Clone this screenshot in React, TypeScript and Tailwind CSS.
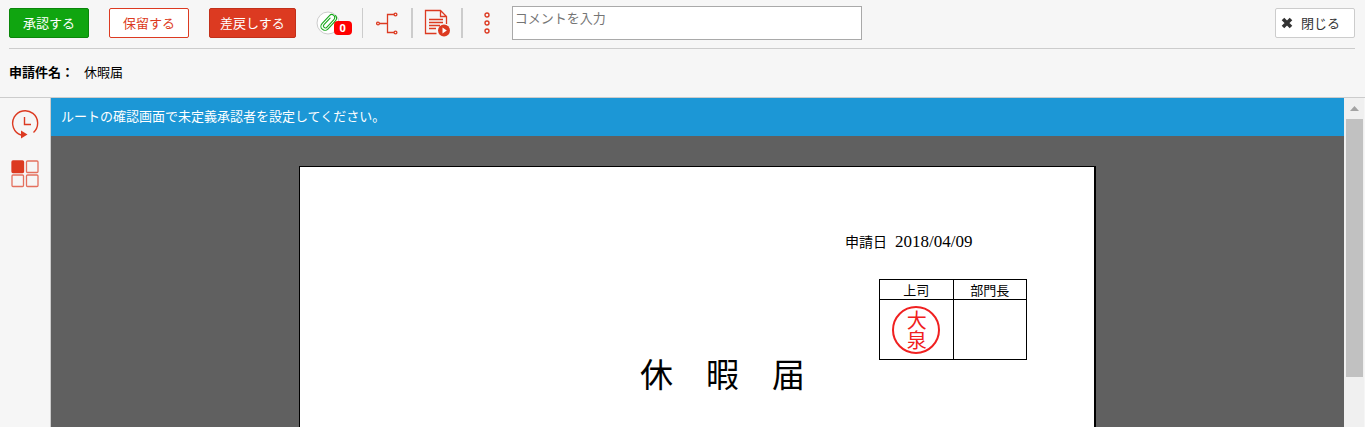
import type { ReactNode } from 'react'

const actions = [
  { label: '承認する', style: 'border-[#0a860a] bg-[#10a510] text-white' },
  { label: '保留する', style: 'border-[#dc3a21] bg-white text-[#dc3a21]' },
  { label: '差戻しする', style: 'border-[#c2301a] bg-[#dc3a21] text-white' },
]

const approvers = [
  { title: '上司', stamp: true },
  { title: '部門長', stamp: false },
]

function ToolButton({ label, className, children }: { label: string; className: string; children: ReactNode }) {
  return (
    <button type="button" aria-label={label} className={`flex h-[30px] items-center justify-center border-[#cccccc] ${className}`}>
      {children}
    </button>
  )
}

function ClipIcon() {
  return (
    <svg width="42" height="26" viewBox="0 0 42 26" fill="none">
      <circle cx="12" cy="13" r="11" fill="#fff" stroke="#cccccc" />
      <g transform="rotate(43 12 13)" stroke="#17a81a" strokeWidth="1.1" strokeLinecap="round">
        <path d="M16 8 V17.500 A4 4 0 0 1 8 17.500 V6.500 A3 3 0 0 1 14 6.500 V17 A1.900 1.900 0 0 1 10.200 17 V8" />
        <path d="M16 8 V6.500 A4 4 0 0 0 12.500 2.500" />
      </g>
    </svg>
  )
}

function RouteIcon() {
  return (
    <svg width="22" height="24" viewBox="0 0 22 24" fill="none" stroke="#dc3a21" strokeWidth="1.300">
      <path d="M3.500 12.500 H11.500 M18 3.500 H11.500 V21.500 H18" />
      <circle cx="2" cy="12.500" r="1.400" />
      <circle cx="19.500" cy="3.500" r="1.400" />
      <circle cx="19.500" cy="21.500" r="1.400" />
    </svg>
  )
}

function DocumentIcon() {
  return (
    <svg width="26" height="28" viewBox="0 0 26 28" fill="none" stroke="#dc3a21" strokeWidth="1.300">
      <path d="M12.500 24.500 H1.500 V1.500 H16.500 L22.500 7.500 V15 M16.500 1.500 V7.500 H22.500" />
      <path d="M5 10.500 H19 M5 13.500 H19 M5 16.500 H16 M5 19.500 H12" />
      <circle cx="20" cy="21.500" r="6" fill="#dc3a21" stroke="none" />
      <path d="M18.500 18.500 V24.500 L22.800 21.500 Z" fill="#fff" stroke="none" />
    </svg>
  )
}

function MenuIcon() {
  return (
    <svg width="6" height="22" viewBox="0 0 6 22" fill="none" stroke="#dc3a21" strokeWidth="1.400">
      <circle cx="3" cy="3" r="2" />
      <circle cx="3" cy="11" r="2" />
      <circle cx="3" cy="19" r="2" />
    </svg>
  )
}

function HistoryIcon() {
  return (
    <svg width="28" height="30" viewBox="0 0 28 30" fill="none" stroke="#dc3a21" strokeWidth="1.400">
      <path d="M22.500 23.500 A12.500 12.500 0 1 0 10 26" />
      <path d="M13.500 8 V15.500 H20" />
      <path d="M10 21.500 V29.500 L16.500 25.500 Z" fill="#dc3a21" stroke="none" />
    </svg>
  )
}

function TilesIcon() {
  return (
    <svg width="28" height="28" viewBox="0 0 28 28" fill="none" stroke="#e4705e" strokeWidth="1.300">
      <rect x="1" y="1" width="11.500" height="11.500" rx="1" fill="#dc3a21" stroke="#dc3a21" />
      <rect x="15.500" y="1" width="11.500" height="11.500" rx="1" />
      <rect x="1" y="15" width="11.500" height="11.500" rx="1" />
      <rect x="15.500" y="15" width="11.500" height="11.500" rx="1" />
    </svg>
  )
}

function CloseIcon() {
  return (
    <svg width="12" height="12" viewBox="0 0 12 12" stroke="#333" strokeWidth="3.600">
      <path d="M2 2 L10 10 M10 2 L2 10" />
    </svg>
  )
}

function Stamp() {
  return (
    <div className="mx-auto flex size-12 items-center justify-center rounded-full border-2 border-[#f02020] text-xl text-[#f02020]">
      <span className="[writing-mode:vertical-rl]">大泉</span>
    </div>
  )
}

export default function App() {
  return (
    <div className="flex h-screen flex-col overflow-hidden bg-[#f6f6f6] font-['Noto_Sans_CJK_JP',sans-serif] text-[13px] text-black">
      <header className="shrink-0 border-b border-[#cccccc] pr-[10px] pl-[9px]">
        <div className="flex h-[49px] items-start border-b border-[#cccccc]">
          <div className="flex gap-5 pt-2">
            {actions.map(({ label, style }) => (
              <button key={label} type="button" className={`h-[30px] min-w-20 rounded-xs border px-[10px] ${style}`}>
                {label}
              </button>
            ))}
          </div>
          <div className="ml-[17px] flex pt-2">
            <ToolButton label="添付ファイル" className="relative w-[50px] border-r">
              <ClipIcon />
              <span className="absolute right-[10px] bottom-[3px] h-[14px] w-[18px] rounded-sm bg-[#ff0000] text-center font-['Open_Sans',sans-serif] text-[11px] leading-[14px] font-bold text-white">
                0
              </span>
            </ToolButton>
            <ToolButton label="ルート" className="w-[50px] border-r-2">
              <RouteIcon />
            </ToolButton>
            <ToolButton label="処理状況" className="w-[50px] border-r-2">
              <DocumentIcon />
            </ToolButton>
            <ToolButton label="メニュー" className="w-[49px]">
              <MenuIcon />
            </ToolButton>
          </div>
          <textarea
            aria-label="コメント"
            placeholder="コメントを入力"
            className="mt-[6px] h-[34px] w-[350px] resize-none border border-[#a9a9a9] bg-white px-[2px] py-px leading-5 placeholder:text-[#757575]"
          />
          <button type="button" className="mt-2 ml-auto flex h-[30px] w-20 items-center gap-2 rounded-xs border border-[#cccccc] bg-white pl-[5px] text-[#333333]">
            <CloseIcon />
            閉じる
          </button>
        </div>
        <div className="flex h-12 items-center pb-[2px]">
          <span className="font-bold">申請件名：</span>
          <span className="ml-[10px]">休暇届</span>
        </div>
      </header>

      <div className="flex min-h-0 flex-1">
        <nav className="flex w-[51px] shrink-0 flex-col items-center gap-[21px] border-r border-[#cccccc] pt-[11px]">
          <button type="button" aria-label="履歴">
            <HistoryIcon />
          </button>
          <button type="button" aria-label="一覧">
            <TilesIcon />
          </button>
        </nav>

        <main className="flex min-w-0 flex-1 flex-col bg-[#606060]">
          <p className="shrink-0 bg-[#1c97d6] px-[10px] pt-2 pb-[10px] leading-5 text-white">
            ルートの確認画面で未定義承認者を設定してください。
          </p>
          <div className="min-h-0 flex-1 overflow-hidden pt-[30px]">
            <article className="mx-auto min-h-full w-[797px] border-t border-r-2 border-l border-black bg-white pt-16">
              <div className="ml-[545px] flex h-5 items-baseline gap-2 leading-5">
                <span className="text-[14px]">申請日</span>
                <time className="font-['Liberation_Serif',serif] text-[17px]">2018/04/09</time>
              </div>
              <table className="mt-7 ml-[579px] w-[148px] table-fixed border-collapse text-center">
                <thead>
                  <tr className="h-5">
                    {approvers.map(({ title }) => (
                      <th key={title} className="border border-black p-0 leading-[18px] font-normal">
                        {title}
                      </th>
                    ))}
                  </tr>
                </thead>
                <tbody>
                  <tr className="h-[60px]">
                    {approvers.map(({ title, stamp }) => (
                      <td key={title} className="border border-black p-0">
                        {stamp && <Stamp />}
                      </td>
                    ))}
                  </tr>
                </tbody>
              </table>
              <h1 className="ml-[340px] text-[33px] leading-[26px]">休　暇　届</h1>
            </article>
          </div>
        </main>

        {/* Scroll track */}
        <div className="mr-px flex w-5 shrink-0 flex-col items-center bg-[#f0f0f0]">
          <div className="flex h-[21px] items-center">
            <svg width="9" height="5" viewBox="0 0 9 5" fill="#a3a3a3">
              <path d="M4.500 0 L9 5 H0 Z" />
            </svg>
          </div>
          <div className="h-[258px] w-[17px] shrink-0 bg-[#c1c1c1]" />
        </div>
      </div>
    </div>
  )
}
